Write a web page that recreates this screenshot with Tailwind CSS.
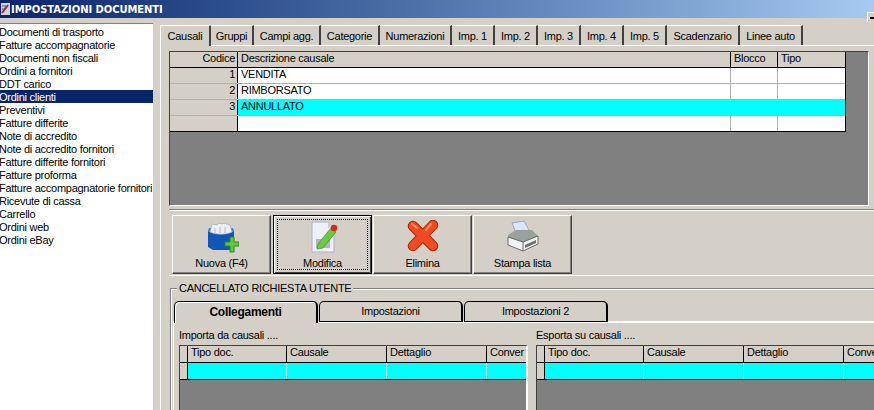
<!DOCTYPE html>
<html><head><meta charset="utf-8"><script src="https://cdn.jsdelivr.net/npm/@tailwindcss/browser@4"></script></head>
<body class="m-0">
<div class="relative w-[874px] h-[410px] overflow-hidden bg-[#d4d0c8] text-black text-[11px] leading-[13px] tracking-[-0.27px] font-['Liberation_Sans',sans-serif]">
  <!-- title bar -->
  <header class="h-[18px] flex items-center bg-gradient-to-r from-[#0a246a] to-[#a6caf0]">
    <svg class="w-[9px] h-[12px] ml-[1px]" viewBox="0 0 9 12"><rect width="9" height="12" fill="#c8d4e8"/><path d="M1 10 7 2" stroke="#b02020" stroke-width="2"/><path d="M1 3h4M1 6h3" stroke="#405080"/></svg>
    <span class="ml-[1px] text-white font-bold text-[10px] tracking-[-0.08px] font-['DejaVu_Sans',sans-serif]">IMPOSTAZIONI DOCUMENTI</span>
  </header>
  <button class="absolute right-[-6px] top-[12px] w-[13px] h-[10px] bg-[#d4d0c8] border-t border-l border-white"><span class="block w-[5px] h-[2px] bg-black ml-[2px] mt-[1px]"></span></button>
  <div class="flex h-[392px]">
    <!-- list -->
    <aside class="w-[153px] shrink-0 mt-[5px] h-[387px] bg-white border-t border-[#808080] overflow-hidden">
      <ul class="pt-[1px] -ml-[1px] whitespace-nowrap leading-[15px]">
        <li class="h-[13px]">Documenti di trasporto</li>
        <li class="h-[13px]">Fatture accompagnatorie</li>
        <li class="h-[13px]">Documenti non fiscali</li>
        <li class="h-[13px]">Ordini a fornitori</li>
        <li class="h-[13px]">DDT carico</li>
        <li class="h-[13px] ml-[1px] -indent-[1px] bg-[#0a246a] text-white overflow-hidden">Ordini clienti</li>
        <li class="h-[13px]">Preventivi</li>
        <li class="h-[13px]">Fatture differite</li>
        <li class="h-[13px]">Note di accredito</li>
        <li class="h-[13px]">Note di accredito fornitori</li>
        <li class="h-[13px]">Fatture differite fornitori</li>
        <li class="h-[13px]">Fatture proforma</li>
        <li class="h-[13px]">Fatture accompagnatorie fornitori</li>
        <li class="h-[13px]">Ricevute di cassa</li>
        <li class="h-[13px]">Carrello</li>
        <li class="h-[13px]">Ordini web</li>
        <li class="h-[13px]">Ordini eBay</li>
      </ul>
    </aside>
    <!-- main -->
    <main class="ml-[7px] w-[714px] shrink-0">
      <nav class="flex h-[27px] pt-[7px] items-stretch">
        <div class="w-[51px] flex items-center justify-center bg-[#d4d0c8] border-t border-l border-white rounded-t-[2px] border-r-2 border-r-[#404040] -mb-px relative z-10">Causali</div>
        <div class="w-[43px] flex items-center justify-center pt-[2px] border-t border-white border-r-2 border-r-[#404040]">Gruppi</div>
        <div class="w-[67px] flex items-center justify-center pt-[2px] border-t border-white border-r-2 border-r-[#404040]">Campi agg.</div>
        <div class="w-[59px] flex items-center justify-center pt-[2px] border-t border-white border-r-2 border-r-[#404040]">Categorie</div>
        <div class="w-[72px] flex items-center justify-center pt-[2px] border-t border-white border-r-2 border-r-[#404040]">Numerazioni</div>
        <div class="w-[43px] flex items-center justify-center pt-[2px] border-t border-white border-r-2 border-r-[#404040]">Imp. 1</div>
        <div class="w-[43px] flex items-center justify-center pt-[2px] border-t border-white border-r-2 border-r-[#404040]">Imp. 2</div>
        <div class="w-[43px] flex items-center justify-center pt-[2px] border-t border-white border-r-2 border-r-[#404040]">Imp. 3</div>
        <div class="w-[43px] flex items-center justify-center pt-[2px] border-t border-white border-r-2 border-r-[#404040]">Imp. 4</div>
        <div class="w-[43px] flex items-center justify-center pt-[2px] border-t border-white border-r-2 border-r-[#404040]">Imp. 5</div>
        <div class="w-[73px] flex items-center justify-center pt-[2px] border-t border-white border-r-2 border-r-[#404040]">Scadenzario</div>
        <div class="w-[63px] flex items-center justify-center pt-[2px] border-t border-white border-r-2 border-r-[#404040]">Linee auto</div>
      </nav>
      <div class="h-[365px] border-t border-l border-white pl-[8px] pt-[5px]">
        <!-- main grid -->
        <div class="w-[700px] h-[155px] bg-[#808080] border-t border-l border-[#404040] border-b-white border-b border-r-white border-r">
          <div class="w-[676px] border-b border-[#000] border-r">
            <div class="grid grid-cols-[68px_493px_47px_1fr] h-[16px] bg-[#d4d0c8] border-b border-black">
              <div class="border-r border-black text-right pr-[2px]">Codice</div>
              <div class="border-r border-black pl-[3px]">Descrizione causale</div>
              <div class="border-r border-black pl-[3px]">Blocco</div>
              <div class="pl-[3px]">Tipo</div>
            </div>
            <div class="grid grid-cols-[68px_493px_47px_1fr] h-[16px] bg-white border-b border-[#b0b0b0]">
              <div class="bg-[#d4d0c8] border-r border-black text-right pr-[2px]">1</div>
              <div class="border-r border-[#b0b0b0] pl-[3px]">VENDITA</div>
              <div class="border-r border-[#b0b0b0]"></div>
              <div></div>
            </div>
            <div class="grid grid-cols-[68px_493px_47px_1fr] h-[16px] bg-white border-b border-[#b0b0b0]">
              <div class="bg-[#d4d0c8] border-r border-black text-right pr-[2px]">2</div>
              <div class="border-r border-[#b0b0b0] pl-[3px]">RIMBORSATO</div>
              <div class="border-r border-[#b0b0b0]"></div>
              <div></div>
            </div>
            <div class="grid grid-cols-[68px_493px_47px_1fr] h-[16px] bg-[#00ffff] border-b border-[#b0b0b0]">
              <div class="bg-[#d4d0c8] border-r border-black text-right pr-[2px]">3</div>
              <div class="pl-[3px]">ANNULLATO</div>
              <div></div>
              <div></div>
            </div>
            <div class="grid grid-cols-[68px_493px_47px_1fr] h-[15px] bg-white">
              <div class="bg-[#d4d0c8] border-r border-black"></div>
              <div class="border-r border-[#b0b0b0]"></div>
              <div class="border-r border-[#b0b0b0]"></div>
              <div></div>
            </div>
          </div>
        </div>
        <!-- toolbar -->
        <div class="mt-[3px] h-[67px] border-t border-[#808080] border-b border-b-white flex gap-[1px] pl-[3px] pt-[5px] w-[705px] shadow-[inset_0_1px_0_#fff]">
          <button class="w-[99px] h-[59px] flex flex-col items-center bg-[#d4d0c8] border-t border-l border-white border-r border-b border-r-[#404040] border-b-[#404040] shadow-[inset_-1px_-1px_0_#808080]">
            <svg class="w-[34px] h-[34px] mt-[4px]" viewBox="0 0 34 34"><path d="M3 11c6 4 20 4 26 0v16l-5 3H8l-5-3Z" fill="#0f56b8"/><path d="M3 11c6 4 20 4 26 0l-1-3H4Z" fill="#2a86e0"/><path d="M5 12 7 4l5 1 1-2 5 1 1-1 6 2 2 7c-6 3-16 3-22 0Z" fill="#eceff4" stroke="#a0a8b8" stroke-width=".7"/><path d="M10 8v5M15 7v6M20 7v6" stroke="#b4bac8"/><path d="M20 22h5v-5h4v5h5v4h-5v6h-4v-6h-5Z" fill="#5ccb3c" stroke="#238a1c"/></svg>
            <span class="mt-[3px]">Nuova (F4)</span>
          </button>
          <button class="ml-[1px] w-[99px] h-[59px] flex flex-col items-center bg-[#d4d0c8] border border-black shadow-[inset_1px_1px_0_#fff,inset_-1px_-1px_0_#404040] relative">
            <span class="absolute inset-[3px] border border-dotted border-black"></span>
            <svg class="w-[32px] h-[32px] mt-[5px]" viewBox="0 0 32 32"><path d="M5 1h16l6 6v24H5Z" fill="#eef1fa" stroke="#a8b0cc"/><path d="M21 1v6h6Z" fill="#c8d0e8"/><rect x="9" y="18" width="14" height="9" fill="#b0b4c8"/><path d="M11 23 24 7l5 4-13 16-6 1Z" fill="#6ccb3c" stroke="#3a8a30" stroke-width=".7"/><circle cx="27" cy="7" r="3.2" fill="#d82818"/></svg>
            <span class="mt-[4px]">Modifica</span>
          </button>
          <button class="w-[99px] h-[59px] flex flex-col items-center bg-[#d4d0c8] border-t border-l border-white border-r border-b border-r-[#404040] border-b-[#404040] shadow-[inset_-1px_-1px_0_#808080]">
            <svg class="w-[32px] h-[32px] mt-[4px]" viewBox="0 0 32 32"><path d="M6 6 26 26M26 5 6 26" stroke="#a82408" stroke-width="10.5" stroke-linecap="round"/><path d="M6 6 26 26M26 5 6 26" stroke="#ee4b22" stroke-width="8.5" stroke-linecap="round"/><path d="M5 4 10 8M24 4 19 10" stroke="#f88a60" stroke-width="2" stroke-linecap="round"/></svg>
            <span class="mt-[5px]">Elimina</span>
          </button>
          <button class="w-[99px] h-[59px] flex flex-col items-center bg-[#d4d0c8] border-t border-l border-white border-r border-b border-r-[#404040] border-b-[#404040] shadow-[inset_-1px_-1px_0_#808080]">
            <svg class="w-[32px] h-[32px] mt-[4px]" viewBox="0 0 32 32"><path d="M5 3 17 1l6 11-13 3Z" fill="#d8e8fa" stroke="#7f94ad" stroke-width=".7"/><path d="M1 15 9 10h16l6 6v6L16 28 1 22Z" fill="#9aa09c"/><path d="M1 17 16 22l15-6v8l-15 7-15-6Z" fill="#f2f2f2" stroke="#505050" stroke-width=".8"/><path d="M16 22v9" stroke="#707070"/><path d="M18 25 29 20v3L18 28Z" fill="#707070"/><circle cx="26" cy="14.500" r="1.400" fill="#70c070"/></svg>
            <span class="mt-[5px]">Stampa lista</span>
          </button>
        </div>
        <!-- group box -->
        <section class="relative mt-[12px] ml-[1px] h-[130px] border-t border-l border-[#808080] shadow-[inset_1px_1px_0_#fff]">
          <span class="absolute left-[6px] -top-[7px] bg-[#d4d0c8] px-[2px]">CANCELLATO RICHIESTA UTENTE</span>
          <div class="flex pl-[3px] pt-[12px] gap-[1px] h-[34px]">
            <div class="w-[144px] h-[22px] flex items-center justify-center font-bold text-[12px] bg-[#d4d0c8] border-t border-l border-black border-r-2 border-r-black rounded-t-[5px] relative z-10 shadow-[inset_1px_1px_0_#fff]">Collegamenti</div>
            <div class="w-[144px] h-[21px] flex items-center justify-center border-t border-l border-black border-r-2 border-b border-r-black rounded-t-[5px]">Impostazioni</div>
            <div class="w-[144px] h-[21px] flex items-center justify-center border-t border-l border-black border-r-2 border-b border-r-black rounded-t-[5px]">Impostazioni 2</div>
          </div>
          <div class="-mt-[2px] ml-[2px] h-[90px] border-t-2 border-l border-white flex pl-[5px]">
            <div class="w-[349px] shrink-0">
              <p class="h-[22px] pt-[6px]">Importa da causali ....</p>
              <div class="h-[70px] bg-[#808080] border-t border-l border-r-2 border-[#404040] border-r-white">
                <div class="border-b border-black">
                  <div class="grid grid-cols-[8px_99px_100px_100px_1fr] h-[17px] bg-[#d4d0c8] border-b border-black overflow-hidden">
                    <div class="border-r border-black"></div>
                    <div class="border-r border-black pl-[3px]">Tipo doc.</div>
                    <div class="border-r border-black pl-[3px]">Causale</div>
                    <div class="border-r border-black pl-[3px]">Dettaglio</div>
                    <div class="pl-[3px] whitespace-nowrap">Conver</div>
                  </div>
                  <div class="grid grid-cols-[8px_99px_100px_100px_1fr] h-[16px] bg-[#00ffff]">
                    <div class="bg-[#d4d0c8] border-r border-black"></div>
                    <div class="border-r border-[#c0ffff]"></div>
                    <div class="border-r border-[#c0ffff]"></div>
                    <div class="border-r border-[#c0ffff]"></div>
                    <div></div>
                  </div>
                </div>
              </div>
            </div>
            <div class="w-[8px] shrink-0"></div>
            <div class="w-[340px] shrink-0">
              <p class="h-[22px] pt-[6px]">Esporta su causali ....</p>
              <div class="h-[70px] bg-[#808080] border-t border-l border-[#404040]">
                <div class="border-b border-black">
                  <div class="grid grid-cols-[8px_99px_100px_100px_1fr] h-[17px] bg-[#d4d0c8] border-b border-black overflow-hidden">
                    <div class="border-r border-black"></div>
                    <div class="border-r border-black pl-[3px]">Tipo doc.</div>
                    <div class="border-r border-black pl-[3px]">Causale</div>
                    <div class="border-r border-black pl-[3px]">Dettaglio</div>
                    <div class="pl-[3px] whitespace-nowrap">Conver</div>
                  </div>
                  <div class="grid grid-cols-[8px_99px_100px_100px_1fr] h-[16px] bg-[#00ffff]">
                    <div class="bg-[#d4d0c8] border-r border-black"></div>
                    <div class="border-r border-[#c0ffff]"></div>
                    <div class="border-r border-[#c0ffff]"></div>
                    <div class="border-r border-[#c0ffff]"></div>
                    <div></div>
                  </div>
                </div>
              </div>
            </div>
          </div>
        </section>
      </div>
    </main>
  </div>
</div>
</body></html>
